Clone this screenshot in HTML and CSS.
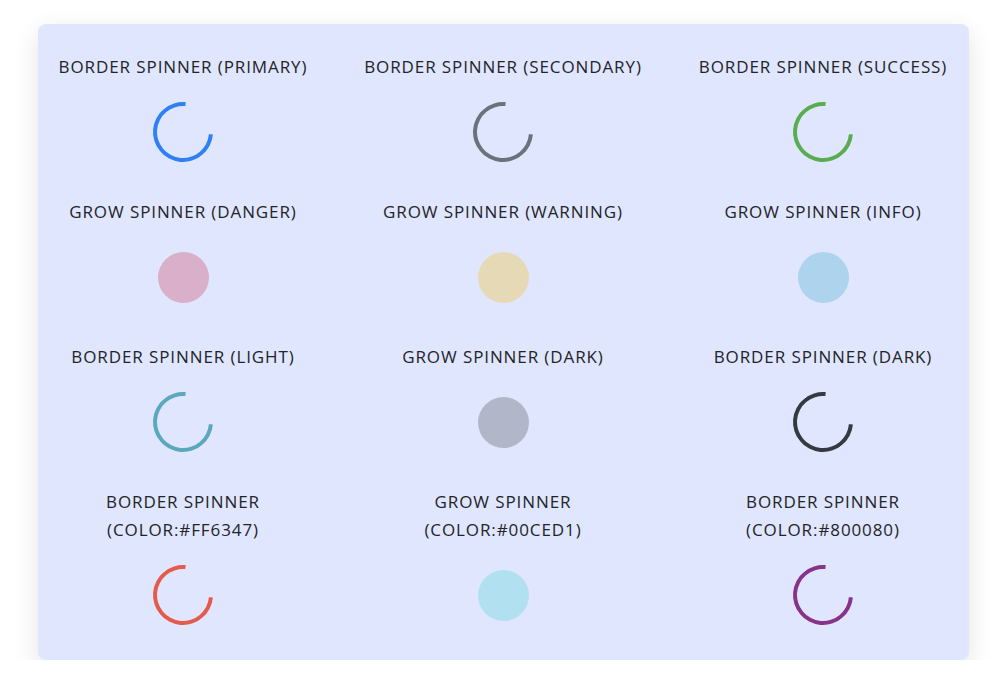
FILE: index.html
```html
<!DOCTYPE html>
<html>
<head>
<meta charset="utf-8">
<link rel="stylesheet" href="styles.css">
</head>
<body>
<div class="card">
  <div class="grid">
    <div class="item"><div class="title">BORDER SPINNER (PRIMARY)</div><div class="box"><div class="ring c-primary"></div></div></div>
    <div class="item"><div class="title">BORDER SPINNER (SECONDARY)</div><div class="box"><div class="ring c-secondary"></div></div></div>
    <div class="item"><div class="title">BORDER SPINNER (SUCCESS)</div><div class="box"><div class="ring c-success"></div></div></div>

    <div class="item"><div class="title">GROW SPINNER (DANGER)</div><div class="box"><div class="dot g-danger"></div></div></div>
    <div class="item"><div class="title">GROW SPINNER (WARNING)</div><div class="box"><div class="dot g-warning"></div></div></div>
    <div class="item"><div class="title">GROW SPINNER (INFO)</div><div class="box"><div class="dot g-info"></div></div></div>

    <div class="item"><div class="title">BORDER SPINNER (LIGHT)</div><div class="box"><div class="ring c-light"></div></div></div>
    <div class="item"><div class="title">GROW SPINNER (DARK)</div><div class="box"><div class="dot g-dark"></div></div></div>
    <div class="item"><div class="title">BORDER SPINNER (DARK)</div><div class="box"><div class="ring c-dark"></div></div></div>

    <div class="item"><div class="title">BORDER SPINNER<br>(COLOR:#FF6347)</div><div class="box"><div class="ring c-tomato"></div></div></div>
    <div class="item"><div class="title">GROW SPINNER<br>(COLOR:#00CED1)</div><div class="box"><div class="dot g-cyan"></div></div></div>
    <div class="item"><div class="title">BORDER SPINNER<br>(COLOR:#800080)</div><div class="box"><div class="ring c-purple"></div></div></div>
  </div>
</div>
</body>
</html>
```
FILE: styles.css
```css
html, body {
  margin: 0;
  padding: 0;
  background: #ffffff;
}
body {
  padding: 24px 31px 0 38px;
  font-family: "Open Sans", "Liberation Sans", sans-serif;
  color: #222428;
}
.card {
  width: 931px;
  box-sizing: border-box;
  background: #e0e6fe;
  border-radius: 8px;
  box-shadow: 0 8px 26px rgba(0, 0, 0, 0.11);
  padding: 29px 0 35px 0;
}
.grid {
  display: grid;
  grid-template-columns: 290px 290px 290px;
  column-gap: 30px;
  row-gap: 36px;
}
.item {
  display: flex;
  flex-direction: column;
  align-items: center;
}
.title {
  font-size: 17px;
  line-height: 28px;
  letter-spacing: 0.9px;
  text-align: center;
  white-space: nowrap;
}
.box {
  margin-top: 21px;
  width: 60px;
  height: 60px;
  display: flex;
  align-items: center;
  justify-content: center;
}
.ring {
  width: 60px;
  height: 60px;
  box-sizing: border-box;
  border: 4px solid currentColor;
  border-right-color: transparent;
  border-radius: 50%;
  transform: rotate(-40deg);
}
.dot {
  width: 51px;
  height: 51px;
  border-radius: 50%;
}
.c-primary { color: #2f80f5; }
.c-secondary { color: #6a737b; }
.c-success { color: #5aac50; }
.c-light { color: #5aa8bb; }
.c-dark { color: #343a40; }
.c-tomato { color: #e45a4b; }
.c-purple { color: #88338a; }
.g-danger { background: #d9afc9; }
.g-warning { background: #e6d9b6; }
.g-info { background: #add4ec; }
.g-dark { background: #b1b7c9; }
.g-cyan { background: #b1e0f1; }
```
